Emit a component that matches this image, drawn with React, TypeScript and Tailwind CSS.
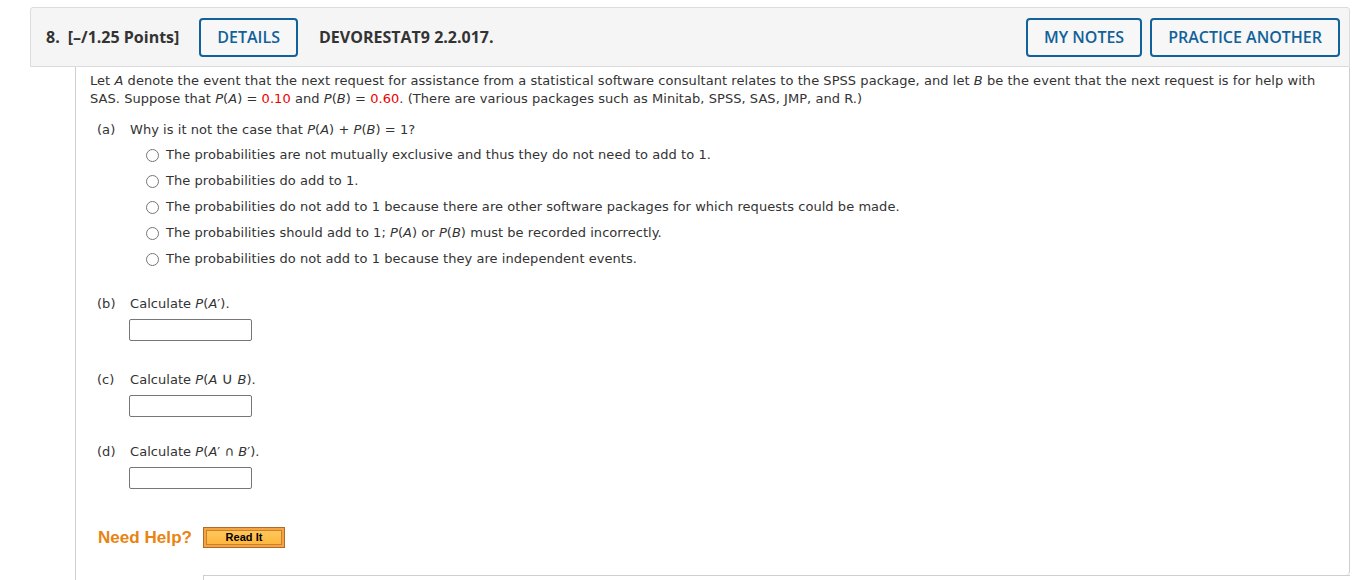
import React from "react";

const OPTIONS: React.ReactNode[] = [
  "The probabilities are not mutually exclusive and thus they do not need to add to 1.",
  "The probabilities do add to 1.",
  "The probabilities do not add to 1 because there are other software packages for which requests could be made.",
  <>
    The probabilities should add to 1; <i>P</i>(<i>A</i>) or <i>P</i>(<i>B</i>) must be recorded incorrectly.
  </>,
  "The probabilities do not add to 1 because they are independent events.",
];

function HeaderButton({ label }: { label: string }) {
  return (
    <button className="h-[39px] px-[16px] rounded-[4px] border-2 border-[#11629a] text-[#11629a] text-[16px] font-semibold font-['Open_Sans',sans-serif] bg-[#f7f7f7]">
      {label}
    </button>
  );
}

function AnswerBox() {
  return <div className="w-[123px] h-[22px] border border-[#767676] rounded-[2px] bg-white" />;
}

function Part({ label, children }: { label: string; children: React.ReactNode }) {
  return (
    <div className="flex leading-[18px]">
      <span className="w-[40px] pl-[7px]">{label}</span>
      <span>{children}</span>
    </div>
  );
}

export default function App() {
  return (
    <div className="w-[1366px] h-[580px] overflow-hidden bg-white text-[#333] font-['DejaVu_Sans',sans-serif]">
      <div className="pt-[7px] pl-[30px] w-[1350px]">
        {/* question header */}
        <div className="h-[60px] flex items-center border border-[#dcdcdc] rounded-t-[3px] bg-[#f5f5f5] pl-[15px] pr-[9px] font-['Open_Sans',sans-serif]">
          <span className="text-[16px] font-bold text-[#333]">8.</span>
          <span className="ml-[8px] text-[16px] font-bold text-[#333]">[–/1.25 Points]</span>
          <div className="ml-[20px]">
            <HeaderButton label="DETAILS" />
          </div>
          <span className="ml-[21px] text-[16px] font-bold text-[#333]">DEVORESTAT9 2.2.017.</span>
          <div className="ml-auto flex gap-[8px]">
            <HeaderButton label="MY NOTES" />
            <HeaderButton label="PRACTICE ANOTHER" />
          </div>
        </div>

        {/* question body */}
        <div className="ml-[45px] border-l border-[#cfcfcf] h-[520px] flex flex-col">
          <div className="border-r border-[#cfcfcf] rounded-br-[4px] pl-[14px] pt-[5px] text-[13px] tracking-[0.05px] h-[508px]">
            <p className="leading-[18px] whitespace-nowrap">
              Let <i>A</i> denote the event that the next request for assistance from a statistical software consultant relates to the SPSS package, and let <i>B</i> be the event that the next request is for help with
              <br />
              SAS. Suppose that <i>P</i>(<i>A</i>) = <span className="text-[#e00]">0.10</span> and <i>P</i>(<i>B</i>) = <span className="text-[#e00]">0.60</span>. (There are various packages such as Minitab, SPSS, SAS, JMP, and R.)
            </p>

            <div className="mt-[13px]">
              <Part label="(a)">
                Why is it not the case that <i>P</i>(<i>A</i>) + <i>P</i>(<i>B</i>) = 1?
              </Part>
              <div className="ml-[56px] mt-[7px] flex flex-col gap-[8px]">
                {OPTIONS.map((opt, i) => (
                  <label key={i} className="flex items-center leading-[18px]">
                    <span className="w-[13px] h-[13px] rounded-full border border-[#767676] bg-white shrink-0" />
                    <span className="ml-[7px]">{opt}</span>
                  </label>
                ))}
              </div>
            </div>

            <div className="mt-[27px]">
              <Part label="(b)">
                Calculate <i>P</i>(<i>A</i>′).
              </Part>
              <div className="ml-[39px] mt-[6px]">
                <AnswerBox />
              </div>
            </div>

            <div className="mt-[30px]">
              <Part label="(c)">
                Calculate <i>P</i>(<i>A</i> <span className="text-[16px] leading-none">∪</span> <i>B</i>).
              </Part>
              <div className="ml-[39px] mt-[6px]">
                <AnswerBox />
              </div>
            </div>

            <div className="mt-[26px]">
              <Part label="(d)">
                Calculate <i>P</i>(<i>A</i>′ ∩ <i>B</i>′).
              </Part>
              <div className="ml-[39px] mt-[6px]">
                <AnswerBox />
              </div>
            </div>

            {/* help */}
            <div className="mt-[36px] ml-[8px] flex items-center">
              <span className="text-[17px] font-bold text-[#ea8310] font-['Liberation_Sans',Arial,sans-serif]">Need Help?</span>
              <div className="ml-[11px] w-[82px] h-[21px] border border-[#ad6a2b] bg-[#f5a43f] p-[2px]">
                <div className="h-full border border-[#c9802f] bg-gradient-to-b from-[#ffc65a] to-[#ffb73f] flex items-center justify-center text-[11px] font-bold text-black font-['Liberation_Sans',Arial,sans-serif] leading-none">
                  Read It
                </div>
              </div>
            </div>
          </div>
          <div className="flex-1 ml-[127px] border-t border-l border-[#cfcfcf]" />
        </div>
      </div>
    </div>
  );
}
